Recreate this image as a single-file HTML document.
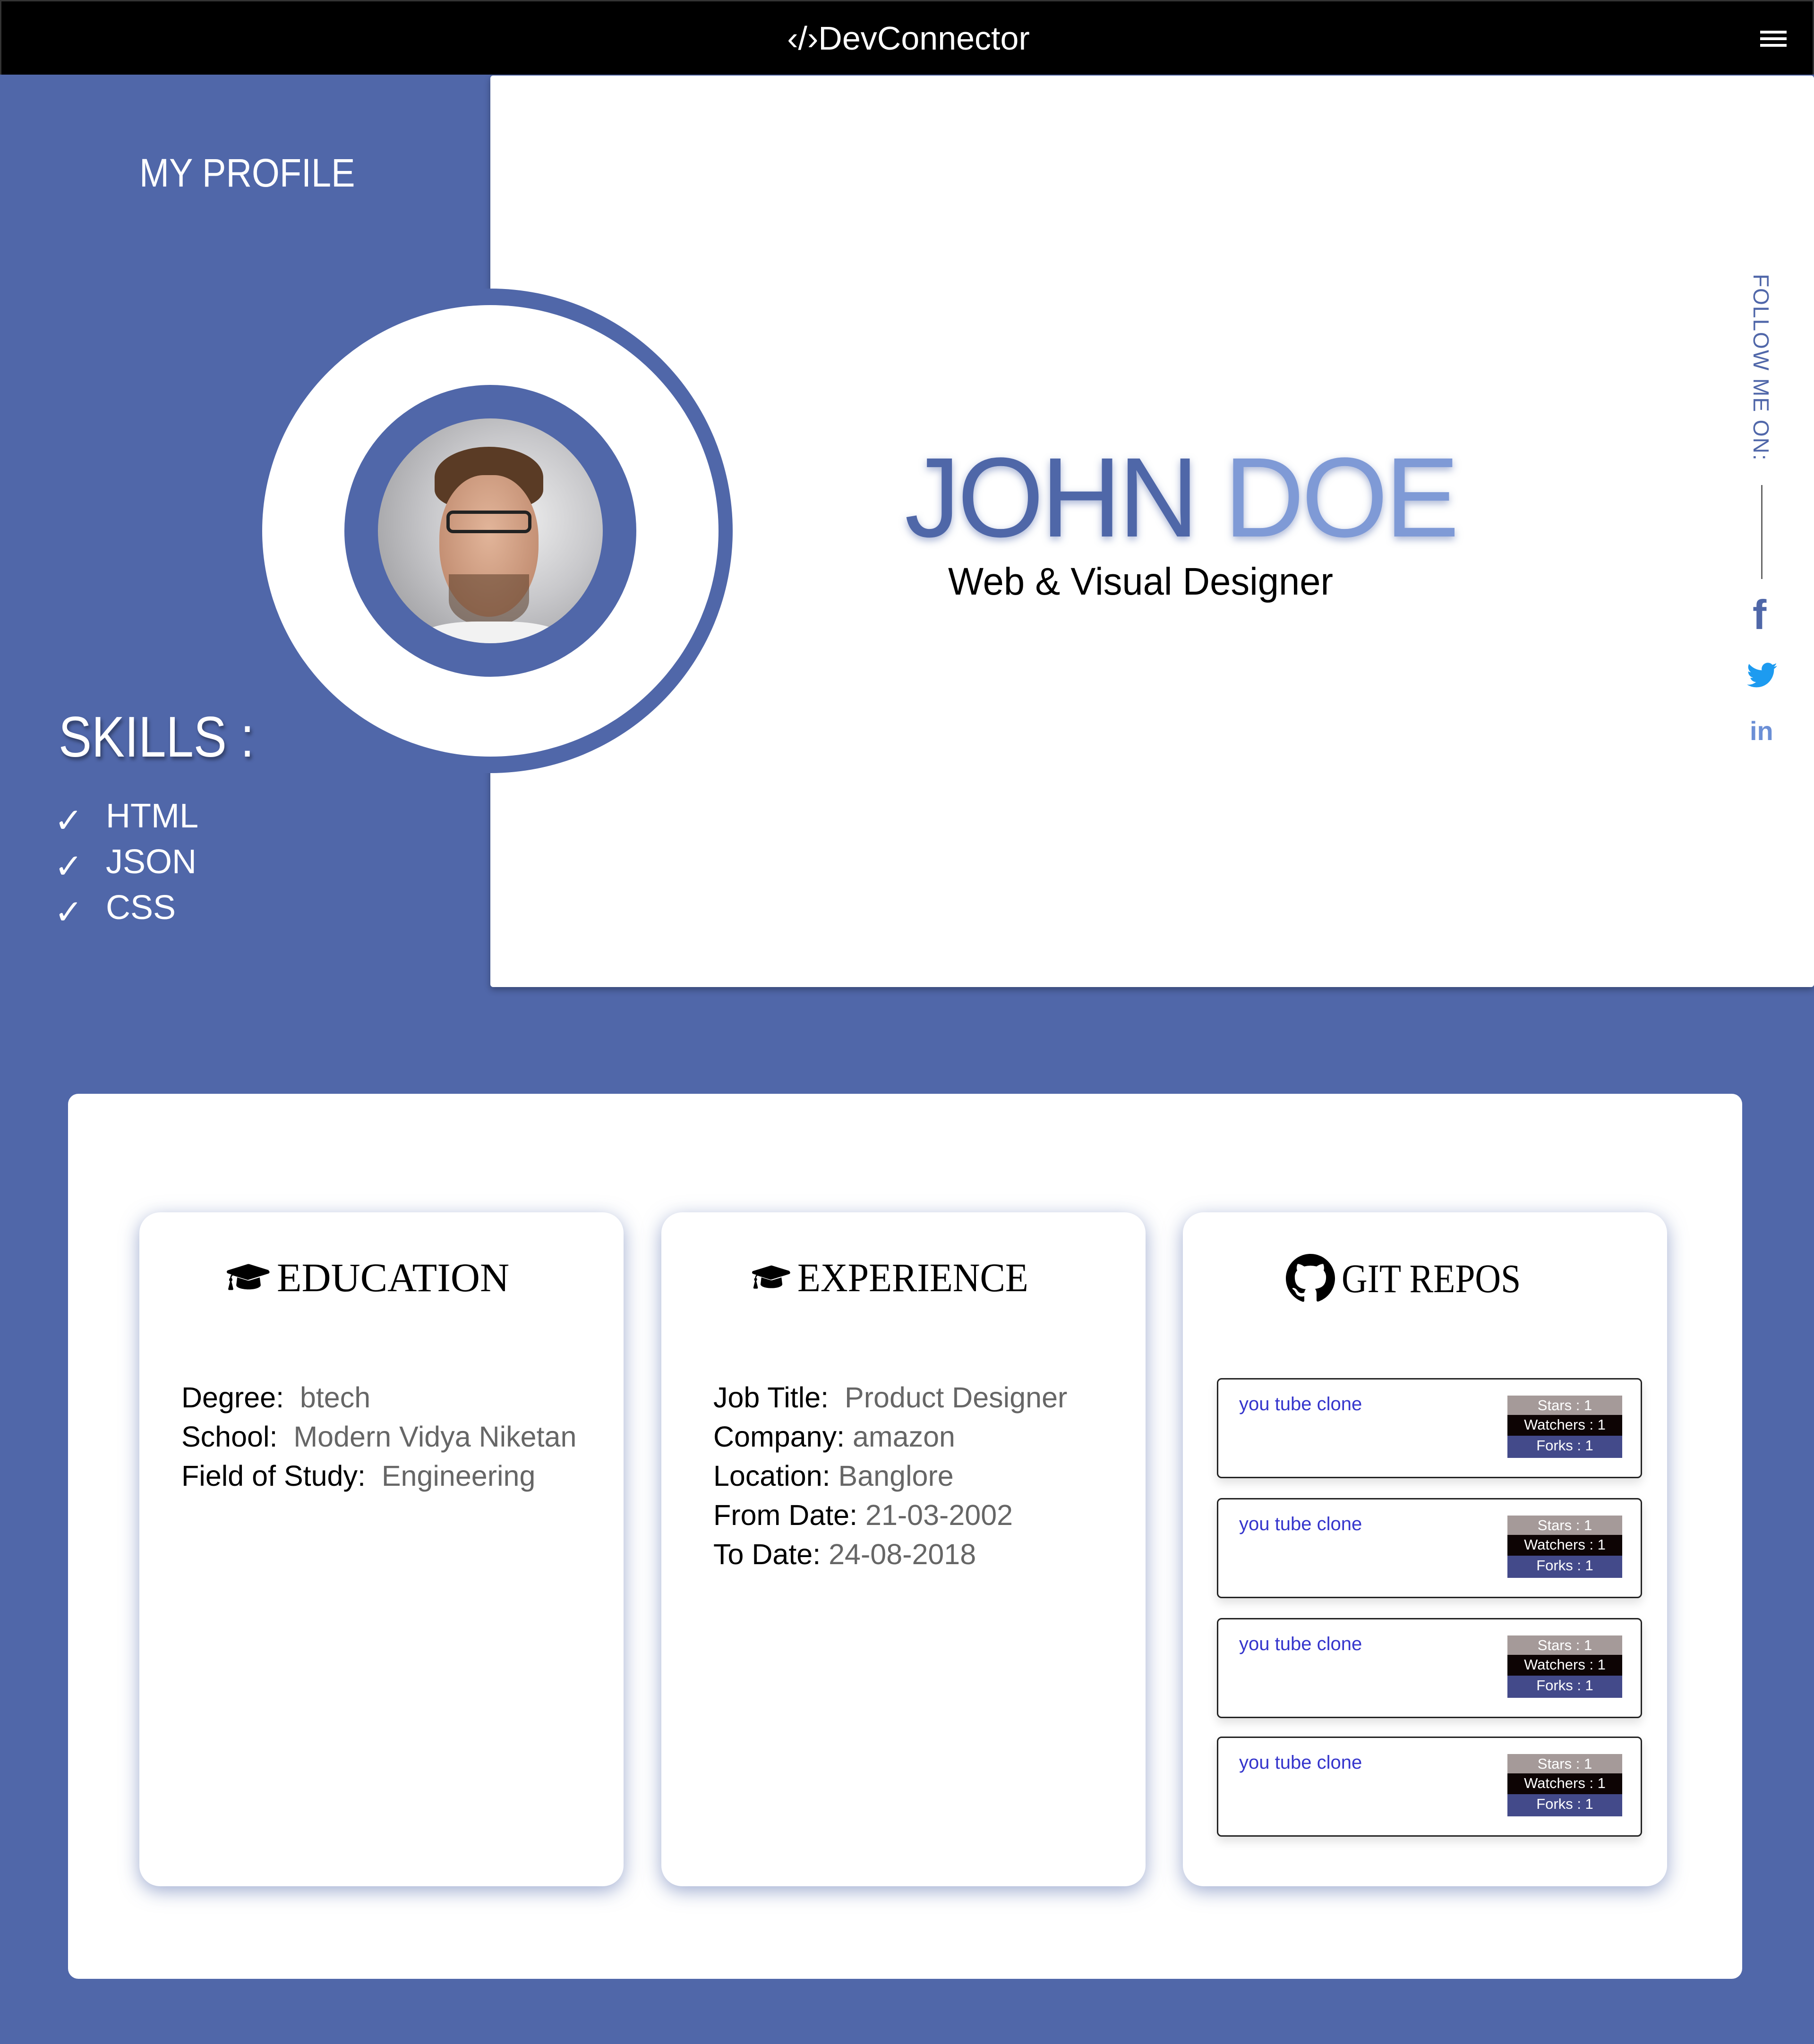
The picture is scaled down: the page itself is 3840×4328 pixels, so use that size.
<!DOCTYPE html>
<html><head><meta charset="utf-8"><style>
*{margin:0;padding:0;box-sizing:border-box}
body{width:3840px;height:4328px;background:#5067a9;font-family:"Liberation Sans",sans-serif;position:relative;overflow:hidden}
.a{position:absolute}
nav{position:absolute;left:0;top:0;width:3840px;height:158px;background:#000;border:3px solid #333;border-bottom:none}
.brand{position:absolute;left:0;width:3840px;top:38px;text-align:center;color:#fff;font-size:70px}
.ham{position:absolute;left:3723px;top:62px;width:56px;height:6px;background:#fff;box-shadow:0 14px 0 #fff,0 28px 0 #fff}
.hero{left:1038px;top:160px;width:2802px;height:1930px;background:#fff;box-shadow:0 6px 14px rgba(0,0,0,.3);border-radius:6px}
.circ{border-radius:50%}
.edu{background:#fff;border-radius:44px;box-shadow:0 10px 40px rgba(80,103,169,.55);top:2567px;width:1025px;height:1427px}
.h{position:absolute;top:2655px;font-family:"Liberation Serif",serif;font-size:86px;color:#000;display:flex;align-items:center;gap:14px}
.t{font-size:61px;line-height:83px;color:#000}
.t span{color:#666}
.repo{left:2576px;width:900px;height:212px;border:3px solid #222;border-radius:10px;background:#fff;box-shadow:0 10px 20px rgba(0,0,0,.12)}
.rn{position:absolute;left:44px;top:30px;color:#3535cc;font-size:40px}
.bd{position:absolute;left:612px;top:34px;width:243px;font-size:31px;color:#fff;text-align:center}
.bd div{height:42px;line-height:42px}
.sx{transform-origin:left center;display:inline-block}
</style></head><body>
<nav><div class="brand">‹/›DevConnector</div><div class="ham"></div></nav>
<div class="a sx" style="left:295px;top:318px;color:#fff;font-size:84px;transform:scaleX(.9)">MY PROFILE</div>
<div class="a hero"></div>
<div class="a circ" style="left:525px;top:611px;width:1026px;height:1026px;background:#5067a9"></div>
<div class="a circ" style="left:555px;top:646px;width:966px;height:956px;background:#fff"></div>
<div class="a circ" style="left:729px;top:815px;width:618px;height:618px;background:#5067a9"></div>
<div class="a circ" style="left:800px;top:886px;width:476px;height:476px;overflow:hidden;background:radial-gradient(circle at 60% 45%,#f0f0f0 0,#c8c8cb 45%,#8f8f92 100%)">
<div class="a" style="left:120px;top:60px;width:230px;height:130px;border-radius:50% 50% 30% 30%;background:#5a3b25"></div>
<div class="a" style="left:130px;top:120px;width:210px;height:300px;border-radius:45% 45% 50% 50%;background:radial-gradient(ellipse at 50% 40%,#e2b59a,#b98266)"></div>
<div class="a" style="left:145px;top:195px;width:180px;height:48px;border:7px solid #222;border-radius:14px"></div>
<div class="a" style="left:150px;top:330px;width:170px;height:110px;border-radius:0 0 50% 50%;background:rgba(90,60,40,.55)"></div>
<div class="a" style="left:90px;top:430px;width:300px;height:80px;background:#f2f2f2;border-radius:40% 40% 0 0"></div>
</div>
<div class="a sx" style="left:1915px;top:915px;font-size:240px;letter-spacing:-6px;color:#4f67a8;text-shadow:0 6px 16px rgba(80,103,169,.5);transform:scaleX(.98)">JOHN <span style="color:#7f9ad6">DOE</span></div>
<div class="a sx" style="left:2007px;top:1185px;font-size:82px;color:#000;transform:scaleX(.97)">Web &amp; Visual Designer</div>
<div class="a" style="left:3705px;top:580px;width:50px;writing-mode:vertical-rl;font-size:46px;color:#5067a9;letter-spacing:2px">FOLLOW ME ON:</div>
<div class="a" style="left:3728px;top:1027px;width:3px;height:199px;background:#666"></div>
<div class="a" style="left:3710px;top:1262px;width:46px;font-size:88px;font-weight:bold;color:#4f67a8;line-height:80px">f</div>
<svg class="a" style="left:3698px;top:1402px" width="64" height="56" viewBox="0 0 24 20"><path fill="#1d9bf0" d="M24 2.4a10 10 0 0 1-2.8.8A5 5 0 0 0 23.3.4a10 10 0 0 1-3.1 1.2A4.9 4.9 0 0 0 11.8 6 14 14 0 0 1 1.7.9a4.9 4.9 0 0 0 1.5 6.6 4.9 4.9 0 0 1-2.2-.6 4.9 4.9 0 0 0 3.9 4.9 4.9 4.9 0 0 1-2.2.1 4.9 4.9 0 0 0 4.6 3.4A9.9 9.9 0 0 1 0 17.3 14 14 0 0 0 7.5 19.5c9 0 14-7.5 14-14v-.6A10 10 0 0 0 24 2.4z"/></svg>
<div class="a" style="left:3704px;top:1515px;font-size:56px;font-weight:bold;color:#6b8fd6">in</div>
<div class="a sx" style="left:124px;top:1490px;color:#fff;font-size:122px;text-shadow:4px 6px 8px rgba(0,0,0,.4);transform:scaleX(.86)">SKILLS :</div>
<div class="a" style="left:115px;top:1690px;color:#fff;font-size:72px;line-height:97px">✓<br>✓<br>✓</div>
<div class="a" style="left:224px;top:1680px;color:#fff;font-size:72px;line-height:97px">HTML<br>JSON<br>CSS</div>
<div class="a" style="left:144px;top:2316px;width:3544px;height:1874px;background:#fff;border-radius:22px"></div>
<div class="a edu" style="left:295px"></div>
<div class="a edu" style="left:1400px"></div>
<div class="a edu" style="left:2504px"></div>
<svg width="0" height="0"><defs><symbol id="cap" viewBox="0 0 640 512"><path d="M622 149L331 59a40 40 0 0 0-22 0L18 149c-24 8-24 40 0 47l51 16c-11 14-18 31-19 50-9 5-15 15-15 26 0 11 6 20 14 25L22 422c-3 10 5 18 15 18h44c10 0 17-8 15-18l-27-109c8-5 14-14 14-25 0-11-6-20-14-25 1-16 9-30 21-38l209 64c10 3 20 4 22 0l291-90c24-7 24-39 0-46zM341 299c-14 4-29 5-42 0l-145-45L140 368c0 35 81 64 180 64s180-29 180-64l-14-114-145 45z"/></symbol></defs></svg>
<div class="h" style="left:480px"><svg width="92" height="74"><use href="#cap"/></svg>EDUCATION</div>
<div class="h" style="left:1592px"><svg width="82" height="66"><use href="#cap"/></svg><span class="sx" style="transform:scaleX(.93)">EXPERIENCE</span></div>
<div class="h" style="left:2722px"><svg width="104" height="104" viewBox="0 0 16 16"><path d="M8 0C3.6 0 0 3.6 0 8c0 3.5 2.3 6.5 5.5 7.6.4.1.5-.2.5-.4v-1.4c-2.2.5-2.7-1-2.7-1-.4-.9-.9-1.2-.9-1.2-.7-.5.1-.5.1-.5.8.1 1.200.8 1.2.8.7 1.2 1.9.9 2.3.7.1-.5.3-.9.5-1.1-1.8-.2-3.6-.9-3.6-4 0-.9.3-1.600.8-2.1-.1-.2-.4-1 .1-2.1 0 0 .7-.2 2.2.8a7.5 7.5 0 0 1 4 0c1.5-1 2.2-.8 2.2-.8.4 1.1.2 1.9.1 2.1.5.6.8 1.3.8 2.1 0 3.1-1.9 3.7-3.6 3.9.3.3.5.8.5 1.5v2.2c0 .2.1.5.6.4A8 8 0 0 0 16 8c0-4.4-3.6-8-8-8z"/></svg><span class="sx" style="transform:scaleX(.88)">GIT REPOS</span></div>
<div class="a t" style="left:384px;top:2918px">Degree:&nbsp; <span>btech</span><br>School:&nbsp; <span>Modern Vidya Niketan</span><br>Field of Study:&nbsp; <span>Engineering</span></div>
<div class="a t" style="left:1510px;top:2918px">Job Title:&nbsp; <span>Product Designer</span><br>Company: <span>amazon</span><br>Location: <span>Banglore</span><br>From Date: <span>21-03-2002</span><br>To Date: <span>24-08-2018</span></div>
<div class="a repo" style="top:2918px"><div class="rn">you tube clone</div><div class="bd"><div style="background:#a59a99;height:41px">Stars : 1</div><div style="background:#0d0404;height:44px">Watchers : 1</div><div style="background:#434a8a;height:47px">Forks : 1</div></div></div>
<div class="a repo" style="top:3172px"><div class="rn">you tube clone</div><div class="bd"><div style="background:#a59a99;height:41px">Stars : 1</div><div style="background:#0d0404;height:44px">Watchers : 1</div><div style="background:#434a8a;height:47px">Forks : 1</div></div></div>
<div class="a repo" style="top:3426px"><div class="rn">you tube clone</div><div class="bd"><div style="background:#a59a99;height:41px">Stars : 1</div><div style="background:#0d0404;height:44px">Watchers : 1</div><div style="background:#434a8a;height:47px">Forks : 1</div></div></div>
<div class="a repo" style="top:3677px"><div class="rn">you tube clone</div><div class="bd"><div style="background:#a59a99;height:41px">Stars : 1</div><div style="background:#0d0404;height:44px">Watchers : 1</div><div style="background:#434a8a;height:47px">Forks : 1</div></div></div>
</body></html>
